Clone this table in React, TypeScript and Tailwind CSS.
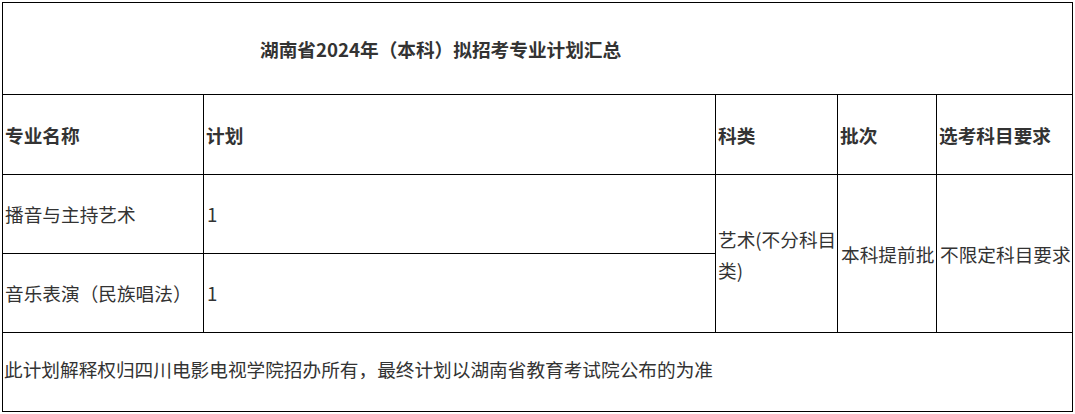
import React from "react";

const font = { fontFamily: '"Noto Sans CJK SC", "Microsoft YaHei", sans-serif' };

export default function App() {
  return (
    <div className="bg-white w-[1075px] h-[414px] p-[2px]" style={font}>
      <div className="grid grid-cols-[200px_511px_121px_98px_135px] grid-rows-[91px_79px_78px_78px_78px] gap-px bg-black p-px w-[1071px] text-[18.67px] text-[#333]">
        <div className="col-span-5 bg-white flex items-center pl-[257px] font-bold">
          湖南省2024年（本科）拟招考专业计划汇总
        </div>
        <div className="bg-white flex items-center pl-[2px] font-bold">专业名称</div>
        <div className="bg-white flex items-center pl-[2px] font-bold">计划</div>
        <div className="bg-white flex items-center pl-[2px] font-bold">科类</div>
        <div className="bg-white flex items-center pl-[2px] font-bold">批次</div>
        <div className="bg-white flex items-center pl-[2px] font-bold">选考科目要求</div>

        <div className="bg-white flex items-center pl-[2px]">播音与主持艺术</div>
        <div className="bg-white flex items-center pl-[3px]">1</div>
        <div className="row-span-2 bg-white flex items-center pl-[2px] leading-[31px]">
          <span>
            艺术(不分科目
            <br />
            类)
          </span>
        </div>
        <div className="row-span-2 bg-white flex items-center pl-[3px] whitespace-nowrap">本科提前批</div>
        <div className="row-span-2 bg-white flex items-center pl-[3px] whitespace-nowrap">不限定科目要求</div>

        <div className="bg-white flex items-center pl-[2px]">音乐表演（民族唱法）</div>
        <div className="bg-white flex items-center pl-[3px]">1</div>

        <div className="col-span-5 bg-white flex items-center pl-[1px] pb-[6px]">
          此计划解释权归四川电影电视学院招办所有，最终计划以湖南省教育考试院公布的为准
        </div>
      </div>
    </div>
  );
}
